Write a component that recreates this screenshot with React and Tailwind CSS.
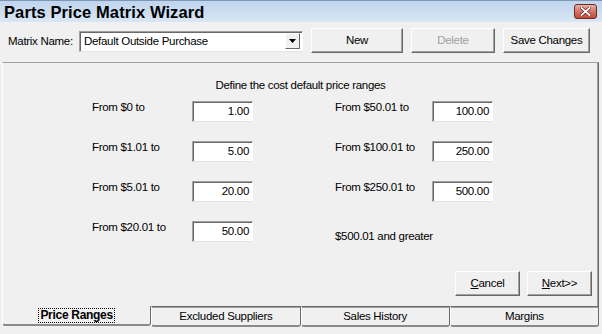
import React from "react";

const leftRows = [
  ["From $0 to", "1.00"],
  ["From $1.01 to", "5.00"],
  ["From $5.01 to", "20.00"],
  ["From $20.01 to", "50.00"],
];

const rightRows = [
  ["From $50.01 to", "100.00"],
  ["From $100.01 to", "250.00"],
  ["From $250.01 to", "500.00"],
  ["$500.01 and greater", null],
];

const Btn = ({ w, children, disabled }) => (
  <div
    className={`${w} h-[25px] flex items-center justify-center bg-[#f0f0f0] border border-t-white border-l-white border-r-[#696969] border-b-[#696969] shadow-[inset_-1px_-1px_0_#a0a0a0] ${
      disabled ? "text-[#a0a0a0]" : "text-black"
    }`}
  >
    {children}
  </div>
);

const Field = ({ value }) => (
  <div className="w-[61px] h-[21px] bg-white border border-t-[#a0a0a0] border-l-[#a0a0a0] border-r-white border-b-[#e3e3e3] shadow-[inset_1px_1px_0_#696969] text-right pr-[3px] leading-[19px]">
    {value}
  </div>
);

const Tab = ({ label, selected }) =>
  selected ? (
    <div className="flex-1 h-[20px] flex items-center justify-center border-l border-l-white border-r border-r-[#696969] border-b-2 border-b-[#8a8a8a] rounded-bl-[3px] rounded-br-[3px] bg-[#f0f0f0]">
      <span className="font-bold text-[12px] leading-[13px] outline-dotted outline-1 outline-black px-[1px]">
        {label}
      </span>
    </div>
  ) : (
    <div className="flex-1 h-[21px] flex items-center justify-center border-t border-t-[#696969] border-l border-l-white border-r border-r-[#696969] border-b-2 border-b-[#8a8a8a] rounded-bl-[3px] rounded-br-[3px] bg-[#f0f0f0] shadow-[inset_0_1px_0_#a0a0a0]">
      <span className="font-normal leading-[13px] pt-[1px]">{label}</span>
    </div>
  );

export default function App() {
  return (
    <div className="w-[602px] h-[334px] overflow-hidden bg-[#f0f0f0] text-black font-['Liberation_Sans',Arial,sans-serif] text-[11.5px] tracking-[-0.3px] select-none">
      {/* title bar */}
      <div className="h-[22px] flex items-center bg-gradient-to-b from-[#bfd4ee] to-[#d9e6f4] border-t border-t-[#7f96b2]">
        <span className="pl-[4px] text-[16.5px] font-bold tracking-[0.1px] leading-[20px]">
          Parts Price Matrix Wizard
        </span>
        <div className="ml-auto mr-[5px] w-[23px] h-[15px] rounded-[3px] border border-[#6e2b25] bg-gradient-to-b from-[#e8b0a6] via-[#d47565] to-[#c24a38] flex items-center justify-center">
          <svg width="11" height="9" viewBox="0 0 11 9">
            <path d="M1.5 1 L9.5 8 M9.5 1 L1.5 8" stroke="#5a1f18" strokeWidth="3.2" strokeLinecap="square" />
            <path d="M1.5 1 L9.5 8 M9.5 1 L1.5 8" stroke="#ffffff" strokeWidth="1.8" strokeLinecap="square" />
          </svg>
        </div>
      </div>

      {/* toolbar */}
      <div className="h-[40px] flex items-start">
        <div className="ml-[8px] w-[71px] mt-[13px] leading-[13px]">Matrix Name:</div>
        <div className="mt-[9px] w-[224px] h-[21px] flex bg-white border border-t-[#a0a0a0] border-l-[#a0a0a0] border-r-white border-b-[#e3e3e3] shadow-[inset_1px_1px_0_#696969]">
          <div className="flex-1 pl-[4px] leading-[19px]">Default Outside Purchase</div>
          <div className="w-[15px] h-[16px] mt-[1px] mr-[2px] flex items-center justify-center bg-[#f0f0f0] border border-t-white border-l-white border-r-[#696969] border-b-[#696969]">
            <svg width="7" height="4" viewBox="0 0 7 4">
              <path d="M0 0 H7 L3.5 4 Z" fill="#000" />
            </svg>
          </div>
        </div>
        <div className="ml-[8px] mt-[6px]">
          <Btn w="w-[92px]">New</Btn>
        </div>
        <div className="ml-[8px] mt-[6px]">
          <Btn w="w-[84px]" disabled>
            Delete
          </Btn>
        </div>
        <div className="ml-[8px] mt-[6px]">
          <Btn w="w-[87px]">Save Changes</Btn>
        </div>
      </div>

      {/* tab page */}
      <div className="ml-[2px] w-[597px] h-[244px] border-t border-t-[#a0a0a0] border-l border-l-white border-r border-r-[#696969] shadow-[inset_-1px_0_0_#a0a0a0] flex flex-col">
        <div className="pt-[16px] h-[29px] leading-[13px] text-center">
          Define the cost default price ranges
        </div>
        <div className="mt-[9px] flex flex-col gap-[19px] pl-[89px]">
          {leftRows.map((l, i) => {
            const r = rightRows[i];
            return (
              <div key={i} className="flex items-start h-[21px]">
                <div className="w-[100px] leading-[13px]">{l[0]}</div>
                <Field value={l[1]} />
                <div className="w-[82px]" />
                {r[1] ? (
                  <>
                    <div className="w-[97px] leading-[13px]">{r[0]}</div>
                    <Field value={r[1]} />
                  </>
                ) : (
                  <div className="mt-[9px] leading-[13px]">{r[0]}</div>
                )}
              </div>
            );
          })}
        </div>
        <div className="mt-[29px] flex justify-end gap-[7px] pr-[6px]">
          <Btn w="w-[65px]">
            <span>
              <span className="underline">C</span>ancel
            </span>
          </Btn>
          <Btn w="w-[65px]">
            <span>
              <span className="underline">N</span>ext&gt;&gt;
            </span>
          </Btn>
        </div>
      </div>

      {/* tabs at bottom */}
      <div className="ml-[2px] w-[597px] flex items-start">
        <Tab label="Price Ranges" selected />
        <Tab label="Excluded Suppliers" />
        <Tab label="Sales History" />
        <Tab label="Margins" />
      </div>
    </div>
  );
}
